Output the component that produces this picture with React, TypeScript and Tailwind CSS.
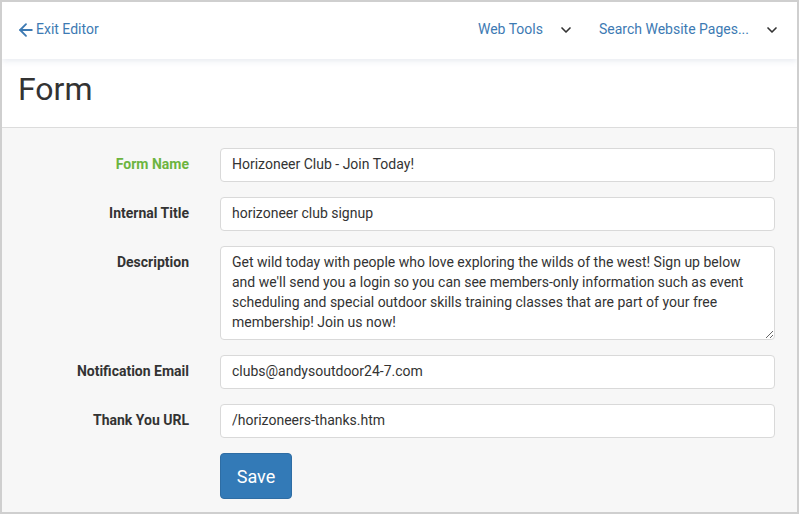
import React from 'react'
import { ArrowLeft, ChevronDown } from 'lucide-react'

const fields = [
    { label: 'Internal Title', value: 'horizoneer club signup' },
]

function Row({ label, active, children }: { label: string; active?: boolean; children: React.ReactNode }) {
    return (
        <div className="flex items-start gap-[31px]">
            <label
                className={`w-[187px] shrink-0 pt-[6px] text-right text-[14px] leading-[20px] font-bold ${active ? 'text-[#6cb43f]' : 'text-[#333]'}`}
            >
                {label}
            </label>
            {children}
        </div>
    )
}

function TextInput({ value }: { value: string }) {
    return (
        <input
            readOnly
            value={value}
            className="h-[34px] w-[555px] rounded-[4px] border border-[#d9d9d9] bg-white px-[11px] pb-[2px] text-[14px] text-[#333] outline-none"
        />
    )
}

export default function App() {
    return (
        <div className="h-[514px] w-[799px] overflow-hidden border-2 border-[#cfcfcf] bg-[#f7f7f7] font-['Roboto',sans-serif]">
            <header className="relative z-10 flex h-[57px] items-center justify-between bg-white pb-[2px] pl-[14px] pr-[17px] shadow-[0_2px_6px_rgba(120,140,170,0.18)]">
                <a className="flex items-center text-[14px] text-[#3d7ab3]">
                    <ArrowLeft className="h-[20px] w-[20px]" strokeWidth={2.2} />
                    Exit Editor
                </a>
                <div className="flex items-center">
                    <div className="flex items-center gap-[15px] text-[14px] text-[#3d7ab3]">
                        Web Tools
                        <ChevronDown className="h-[16px] w-[16px] text-[#333]" strokeWidth={2.5} />
                    </div>
                    <div className="ml-[25px] flex items-center gap-[15px] text-[14px] text-[#3d7ab3]">
                        Search Website Pages...
                        <ChevronDown className="h-[16px] w-[16px] text-[#333]" strokeWidth={2.5} />
                    </div>
                </div>
            </header>
            <div className="h-[69px] border-b border-[#dcdcdc] bg-white pl-[16px] pt-[14px]">
                <h1 className="text-[32px] leading-none text-[#333]">Form</h1>
            </div>
            <form className="flex flex-col gap-[15px] pt-[20px]">
                <Row label="Form Name" active>
                    <TextInput value="Horizoneer Club - Join Today!" />
                </Row>
                {fields.map(f => (
                    <Row key={f.label} label={f.label}>
                        <TextInput value={f.value} />
                    </Row>
                ))}
                <Row label="Description">
                    <textarea
                        readOnly
                        className="h-[94px] w-[555px] resize-y rounded-[4px] border border-[#d9d9d9] bg-white px-[11px] py-[5px] text-[14px] leading-[20px] text-[#333] outline-none"
                        value="Get wild today with people who love exploring the wilds of the west! Sign up below and we'll send you a login so you can see members-only information such as event scheduling and special outdoor skills training classes that are part of your free membership! Join us now!"
                    />
                </Row>
                <Row label="Notification Email">
                    <TextInput value="clubs@andysoutdoor24-7.com" />
                </Row>
                <Row label="Thank You URL">
                    <TextInput value="/horizoneers-thanks.htm" />
                </Row>
                <div className="pl-[218px]">
                    <button
                        type="button"
                        className="h-[46px] w-[72px] rounded-[4px] border border-[#2e6da4] bg-[#337ab7] text-[18px] text-white"
                    >
                        Save
                    </button>
                </div>
            </form>
        </div>
    )
}
